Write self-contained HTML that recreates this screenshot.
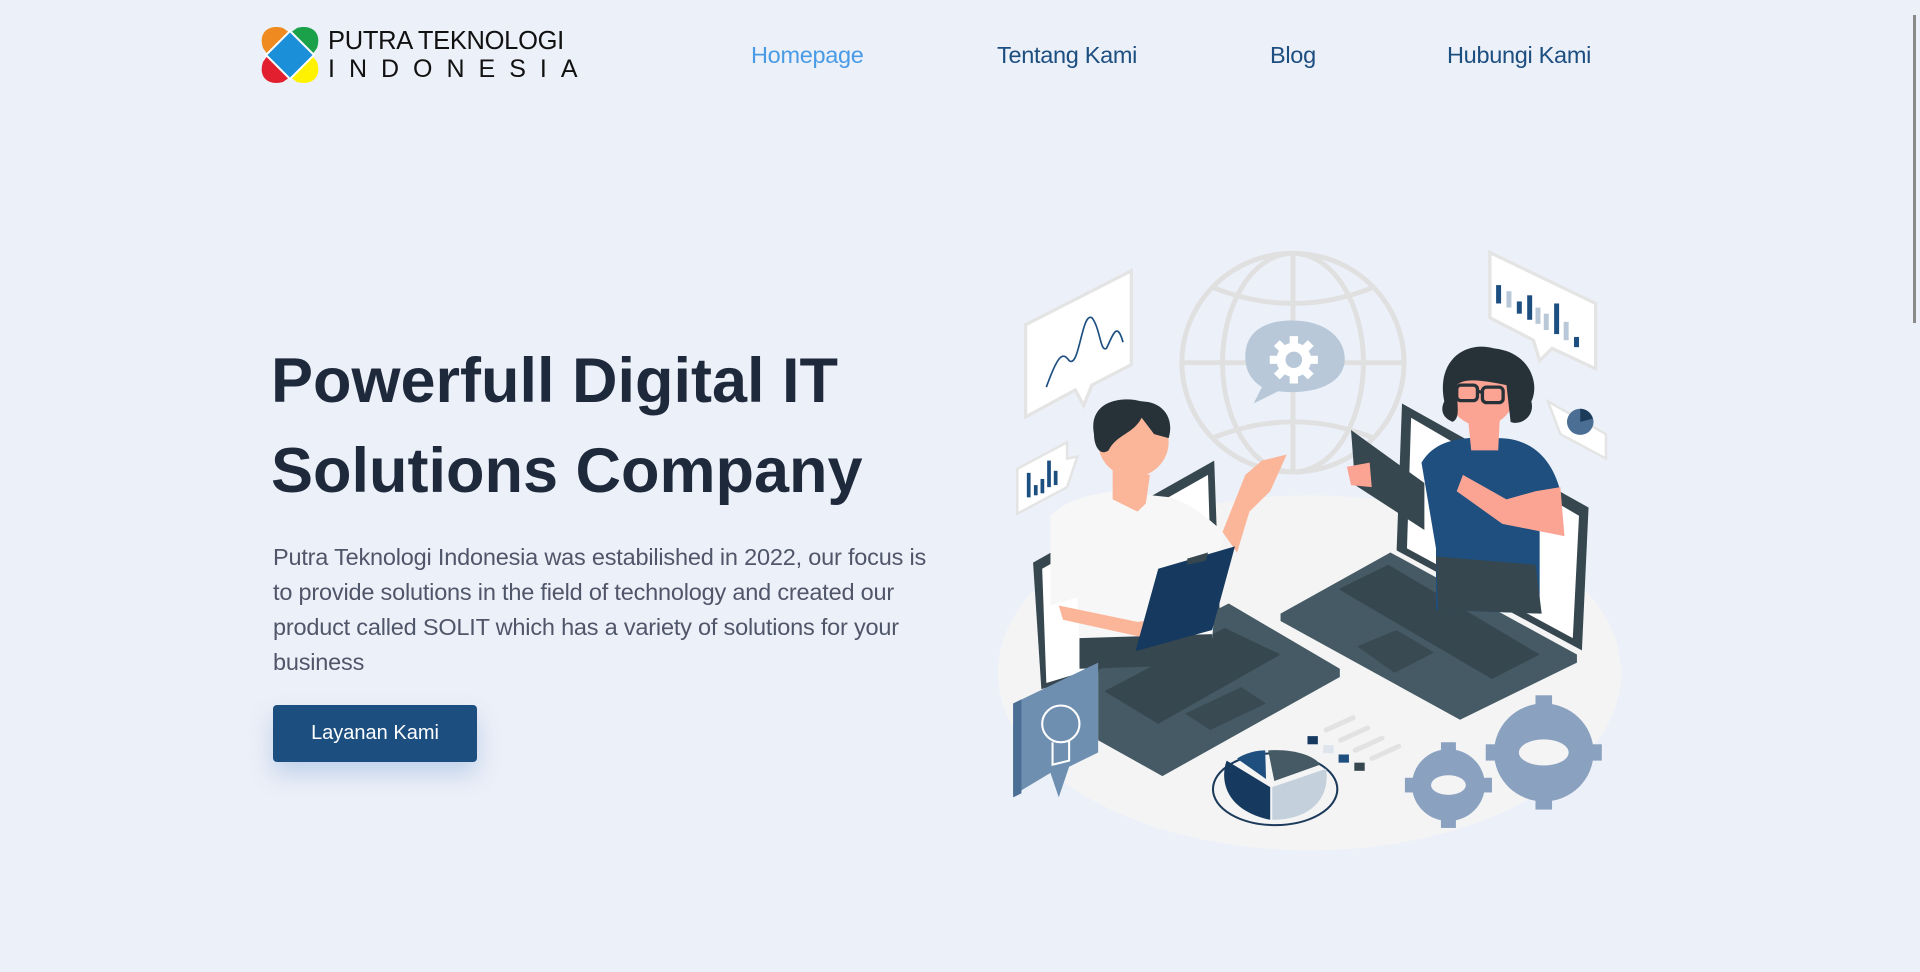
<!DOCTYPE html>
<html><head><meta charset="utf-8"><style>
*{margin:0;padding:0;box-sizing:border-box}
body{width:1920px;height:972px;overflow:hidden;background:#ecf0f8;font-family:"Liberation Sans",sans-serif;position:relative}
.abs{position:absolute}
.nav a{position:absolute;top:42px;font-size:23.5px;color:#1c4e80;text-decoration:none;letter-spacing:-0.3px;white-space:nowrap}
h1{position:absolute;left:271px;top:336px;font-size:63px;font-weight:bold;color:#1e293b;line-height:90px;white-space:nowrap}
p.d{position:absolute;left:273px;top:540px;width:668px;font-size:23.5px;line-height:35px;color:#4f5669;letter-spacing:-0.2px}
.btn{position:absolute;left:273px;top:705px;width:204px;height:57px;background:#1c4e80;border-radius:4px;color:#fff;font-size:20px;text-align:center;line-height:57px;box-shadow:0 12px 24px rgba(80,130,200,.28)}
</style></head><body>
<svg class="abs" style="left:260px;top:25px" width="60" height="60" viewBox="0 0 60 60">
<path d="M3 23 C-2 8 8 -1 23 3 L30 8 L8 30 Z" fill="#ee8a1f"/>
<path d="M37 3 C52 -1 62 8 57 23 L52 30 L30 8 Z" fill="#1aa14a"/>
<path d="M3 37 C-2 52 8 61 23 57 L30 52 L8 30 Z" fill="#e21f2f"/>
<path d="M37 57 C52 61 62 52 57 37 L52 30 L30 52 Z" fill="#fff200"/>
<path d="M30 6 L54 30 L30 54 L6 30 Z" fill="#1b8fd8" stroke="#fff" stroke-width="2"/>
</svg>
<div class="abs" style="left:328px;top:27px;font-size:25.5px;color:#111;letter-spacing:-0.3px;white-space:nowrap">PUTRA TEKNOLOGI</div>
<div class="abs" style="left:328px;top:55px;font-size:25px;color:#111;letter-spacing:14px;white-space:nowrap">INDONESIA</div>
<div class="nav">
<a style="left:751px;color:#4a9be6">Homepage</a>
<a style="left:997px">Tentang Kami</a>
<a style="left:1270px">Blog</a>
<a style="left:1447px">Hubungi Kami</a>
</div>
<div class="abs" style="left:1913px;top:15px;width:3px;height:308px;background:#8a8a8a"></div>
<h1>Powerfull Digital IT<br>Solutions Company</h1>
<p class="d">Putra Teknologi Indonesia was estabilished in 2022, our focus is to provide solutions in the field of technology and created our product called SOLIT which has a variety of solutions for your business</p>
<div class="btn">Layanan Kami</div>

<svg class="abs" style="left:980px;top:230px" width="650" height="640" viewBox="0 0 1568 1568" preserveAspectRatio="none">
<ellipse cx="795" cy="1085" rx="752" ry="435" fill="#f4f4f5"/>
<g fill="none" stroke="#e0e0e0" stroke-width="12">
<circle cx="755" cy="325" r="268"/>
<ellipse cx="755" cy="325" rx="170" ry="268"/>
<line x1="755" y1="57" x2="755" y2="593"/>
<line x1="487" y1="325" x2="1023" y2="325"/>
<path d="M560 140 Q755 220 950 140 M560 510 Q755 430 950 510"/>
</g>
<path d="M640 310 C640 240 700 220 760 222 C840 224 880 270 880 315 C880 380 800 405 720 395 L660 425 L680 385 C650 365 640 340 640 310Z" fill="#b8c8d8"/>
<g transform="translate(757,318)" fill="#fff"><circle r="42"/><g stroke="#fff" stroke-width="20"><line x1="-58" y1="0" x2="58" y2="0"/><line x1="0" y1="-58" x2="0" y2="58"/><line x1="-41" y1="-41" x2="41" y2="41"/><line x1="-41" y1="41" x2="41" y2="-41"/></g><circle r="20" fill="#b8c8d8"/></g>
<path d="M110 232 L365 100 L365 330 L270 380 L250 430 L230 392 L110 458Z" fill="#fff" stroke="#e4e4e4" stroke-width="8"/>
<path d="M160 385 C190 300 200 300 215 320 C240 340 245 200 270 215 C290 240 290 300 305 290 C320 260 330 220 345 275" fill="none" stroke="#1c4e80" stroke-width="4"/>
<path d="M1230 55 L1485 180 L1485 340 L1380 290 L1350 320 L1335 270 L1230 215Z" fill="#fff" stroke="#e4e4e4" stroke-width="8"/>
<g fill="#1c4e80"><rect x="1245" y="135" width="12" height="45"/><rect x="1295" y="175" width="12" height="30"/><rect x="1320" y="160" width="12" height="60"/><rect x="1385" y="180" width="12" height="75"/><rect x="1433" y="262" width="12" height="25"/></g>
<g fill="#b8c8d8"><rect x="1270" y="150" width="12" height="40"/><rect x="1340" y="190" width="12" height="40"/><rect x="1360" y="205" width="12" height="40"/><rect x="1408" y="225" width="12" height="45"/></g>
<path d="M90 585 L210 520 L210 560 L235 555 L210 630 L90 695Z" fill="#fff" stroke="#e4e4e4" stroke-width="6"/>
<g fill="#1c4e80"><rect x="113" y="595" width="9" height="60"/><rect x="130" y="625" width="9" height="25"/><rect x="146" y="610" width="9" height="35"/><rect x="162" y="565" width="9" height="65"/><rect x="178" y="590" width="9" height="35"/></g>
<path d="M1370 420 L1510 500 L1510 560 L1400 500Z" fill="#fff" stroke="#e4e4e4" stroke-width="6"/>
<circle cx="1448" cy="470" r="32" fill="#4a6e94"/><path d="M1448 470 L1448 438 A32 32 0 0 1 1478 462Z" fill="#1c3a5a"/>
<path d="M128 815 L565 565 L578 930 L285 1085 L148 1125Z" fill="#37474f"/>
<path d="M150 830 L550 600 L560 920 L290 1070 L160 1110Z" fill="#fff"/>
<path d="M285 1078 L600 915 L868 1075 L868 1095 L440 1338 L285 1250Z" fill="#455a64"/>
<path d="M300 1130 L590 975 L725 1040 L430 1210Z" fill="#37474f"/>
<path d="M495 1185 L630 1120 L690 1160 L555 1225Z" fill="#3a4a52"/>
<path d="M1005 785 L1018 425 L1468 680 L1452 1030Z" fill="#37474f"/>
<path d="M1030 780 L1040 460 L1445 700 L1430 1000Z" fill="#fff"/>
<path d="M725 940 L990 790 L1440 1040 L1440 1060 L1158 1200 L725 958Z" fill="#455a64"/>
<path d="M865 880 L985 820 L1350 1040 L1235 1100Z" fill="#37474f"/>
<path d="M910 1020 L1005 980 L1095 1035 L1000 1085Z" fill="#3a4a52"/>
<path d="M1065 570 C1100 510 1170 505 1250 510 C1330 510 1380 560 1400 640 L1350 650 L1350 940 L1100 930 L1100 780 Z" fill="#1e4f7f"/>
<path d="M1100 800 L1340 820 L1355 940 L1105 930Z" fill="#37474f"/>
<path d="M1340 640 L1400 630 L1410 750 L1260 720 L1150 640 L1165 600 L1270 660 Z" fill="#fba494"/>
<path d="M1175 440 L1255 440 L1250 540 L1185 540Z" fill="#fba494"/>
<circle cx="1210" cy="400" r="80" fill="#fba494"/>
<path d="M1120 420 C1100 320 1170 270 1240 290 C1330 300 1350 380 1330 420 C1340 460 1300 480 1280 470 L1270 380 C1220 370 1170 360 1150 380 C1150 430 1160 460 1140 470 C1115 460 1110 440 1120 420Z" fill="#263238"/>
<g fill="none" stroke="#263238" stroke-width="8"><rect x="1150" y="380" width="50" height="38" rx="10"/><rect x="1212" y="385" width="50" height="38" rx="10"/><line x1="1200" y1="395" x2="1212" y2="398"/></g>
<path d="M895 490 L1072 620 L1072 735 L905 625Z" fill="#37474f"/>
<path d="M885 580 L940 570 L945 630 L895 625Z" fill="#fba494"/>
<path d="M170 700 C210 660 260 650 320 640 L460 655 C530 680 560 720 590 740 L580 780 L560 1000 L240 1010 L235 900 L170 920Z" fill="#f7f7f7"/>
<path d="M240 1000 L560 990 L560 1065 L240 1075Z" fill="#37474f"/>
<path d="M190 920 L380 960 L470 950 L470 1000 L380 995 L200 955Z" fill="#fbb69a"/>
<path d="M585 740 L640 600 L680 565 L740 550 L700 640 L650 690 L620 790Z" fill="#fbb69a"/>
<path d="M320 580 L410 600 L400 670 L380 690 L320 660Z" fill="#fbb69a"/>
<circle cx="370" cy="520" r="85" fill="#fbb69a"/>
<path d="M275 500 C260 420 340 405 390 420 C440 420 470 460 455 510 L420 500 L390 460 C370 500 330 500 310 540 C290 555 275 530 275 500Z" fill="#263238"/>
<path d="M430 830 L615 775 L560 980 L375 1032Z" fill="#163a5f"/>
<path d="M500 805 L550 790 L545 810 L500 820Z" fill="#37474f"/>
<path d="M80 1160 L285 1060 L285 1280 L215 1315 L190 1390 L170 1330 L80 1385Z" fill="#6f8fb0"/>
<path d="M80 1160 L100 1150 L100 1380 L80 1390Z" fill="#4a6e94"/>
<circle cx="195" cy="1210" r="45" fill="none" stroke="#fff" stroke-width="5"/>
<path d="M175 1255 L175 1310 L215 1300 L215 1250" fill="none" stroke="#fff" stroke-width="5"/>
<g fill="none" stroke="#e2e2e2" stroke-width="12" stroke-linecap="round"><line x1="835" y1="1225" x2="900" y2="1195"/><line x1="870" y1="1250" x2="935" y2="1220"/><line x1="905" y1="1275" x2="970" y2="1245"/><line x1="945" y1="1295" x2="1010" y2="1265"/></g>
<rect x="790" y="1240" width="25" height="20" fill="#163a5f"/><rect x="828" y="1262" width="25" height="20" fill="#dde4ec"/><rect x="865" y="1285" width="25" height="20" fill="#1e4f7f"/><rect x="903" y="1305" width="25" height="20" fill="#37474f"/>
<ellipse cx="712" cy="1370" rx="150" ry="88" fill="none" stroke="#1c3a5a" stroke-width="5"/>
<path d="M700 1365 L595 1300 C580 1340 585 1420 700 1445Z" fill="#163a5f"/>
<path d="M705 1365 L705 1445 C800 1445 845 1390 835 1320Z" fill="#c4d0dc"/>
<path d="M710 1350 L695 1275 C760 1270 810 1290 820 1310Z" fill="#455a64"/>
<path d="M690 1345 L620 1295 C640 1282 665 1275 688 1275Z" fill="#1e4f7f"/>
<g fill="#8aa2c0"><circle cx="1360" cy="1280" r="120"/><circle cx="1130" cy="1360" r="88"/></g>
<g fill="#8aa2c0"><rect x="1340" y="1140" width="40" height="280"/><rect x="1220" y="1260" width="280" height="40"/><rect x="1112" y="1255" width="36" height="210"/><rect x="1025" y="1342" width="210" height="36"/></g>
<ellipse cx="1360" cy="1280" rx="60" ry="32" fill="#f4f4f5"/><ellipse cx="1130" cy="1360" rx="42" ry="24" fill="#f4f4f5"/>
</svg>
</body></html>
